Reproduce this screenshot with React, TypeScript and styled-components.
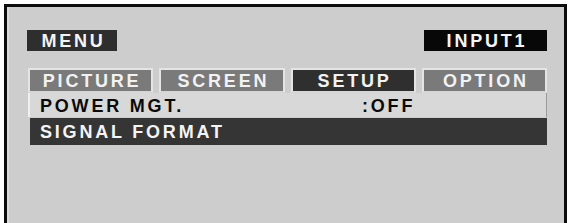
import React from 'react'
import styled, { createGlobalStyle } from 'styled-components'

const GlobalStyle = createGlobalStyle`
  html, body {
    margin: 0;
    padding: 0;
    background: #ffffff;
  }
  body {
    font-family: 'Liberation Sans', Arial, sans-serif;
  }
`

const tabs = ['PICTURE', 'SCREEN', 'SETUP', 'OPTION']

const App: React.FC = () => (
  <>
    <GlobalStyle />
    <StyledFrame>
      <StyledHeader>
        <StyledLabel width={90} tone="#2e2e2e">MENU</StyledLabel>
        <StyledLabel width={123} tone="#080808">INPUT1</StyledLabel>
      </StyledHeader>

      <StyledTabRow>
        {tabs.map((t) => (
          <StyledTab key={t} active={t === 'SETUP'}>
            {t}
          </StyledTab>
        ))}
      </StyledTabRow>

      <StyledItem>
        <StyledItemName>POWER MGT.</StyledItemName>
        <StyledItemValue>:OFF</StyledItemValue>
      </StyledItem>
      <StyledSelectedItem>
        <StyledItemName>SIGNAL FORMAT</StyledItemName>
      </StyledSelectedItem>
    </StyledFrame>
  </>
)

const StyledFrame = styled.div`
  margin: 4px 0 0 4px;
  width: 563px;
  height: 219px;
  box-sizing: border-box;
  border: 3px solid #0c0c0c;
  border-bottom: none;
  background: #cdcdcd;
  padding: 23px 17px 0 20px;
  display: flex;
  flex-direction: column;
  box-shadow: inset 2px 0 0 #dcdcdc;
`

const StyledHeader = styled.div`
  display: flex;
  justify-content: space-between;
  align-items: center;
`

const textStyle = `
  font-size: 18px;
  font-weight: 700;
  letter-spacing: 2.8px;
  line-height: 1;
`

const StyledLabel = styled.div<{ width: number; tone: string }>`
  ${textStyle}
  width: ${(p) => p.width}px;
  height: 21px;
  background: ${(p) => p.tone};
  color: #f4f4f4;
  display: flex;
  align-items: center;
  justify-content: center;
  padding-left: 3px;
  box-sizing: border-box;
`

const StyledTabRow = styled.div`
  margin: 17px 0 0 1px;
  display: grid;
  grid-template-columns: repeat(4, 1fr);
  column-gap: 6px;
`

const StyledTab = styled.div<{ active: boolean }>`
  ${textStyle}
  height: 25px;
  box-sizing: border-box;
  border: 2px solid #e4e4e4;
  border-bottom-color: #d6d6d6;
  background: ${(p) => (p.active ? '#2f2f2f' : '#7a7a7a')};
  color: #f2f2f2;
  display: flex;
  align-items: center;
  justify-content: center;
  padding-left: 3px;
`

const StyledItem = styled.div`
  ${textStyle}
  margin-left: 1px;
  height: 24px;
  box-sizing: border-box;
  background: #d8d8d8;
  border-left: 2px solid #f0f0f0;
  border-right: 1px solid #9a9a9a;
  color: #0a0a0a;
  display: flex;
  align-items: center;
  padding-left: 10px;
`

const StyledSelectedItem = styled(StyledItem)`
  margin: 1px 0 0 3px;
  height: 27px;
  background: #353535;
  border: none;
  color: #f4f4f4;
  padding-left: 10px;
`

const StyledItemName = styled.span`
  width: 322px;
  padding-top: 1px;
`

const StyledItemValue = styled.span`
  padding-top: 1px;
`

export default App
